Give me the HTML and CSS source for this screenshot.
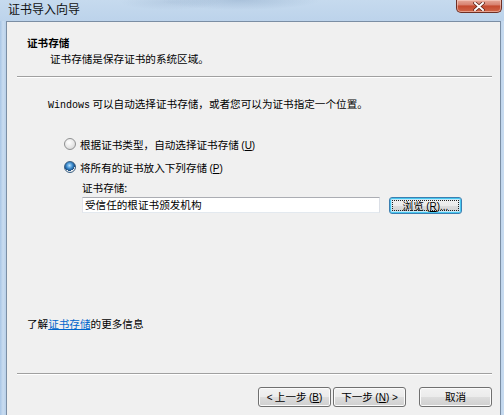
FILE: index.html
```html
<!DOCTYPE html>
<html lang="zh-CN">
<head>
    <meta charset="UTF-8">
    <title>证书导入向导</title>
    <link rel="stylesheet" href="styles.css">
</head>
<body>
    <div class="window">
        <div class="titlebar">
            <span class="title">证书导入向导</span>
            <div class="close">
                <svg width="12" height="9" viewBox="0 0 12 9">
                    <path d="M2 1 L10 8 M10 1 L2 8" stroke="#5a1e14" stroke-width="3.4" stroke-linecap="square"/>
                    <path d="M2 1 L10 8 M10 1 L2 8" stroke="#ffffff" stroke-width="2" stroke-linecap="square"/>
                </svg>
            </div>
        </div>

        <div class="client">
            <div class="header">
                <div class="header-title">证书存储</div>
                <div class="header-sub">证书存储是保存证书的系统区域。</div>
            </div>
            <div class="sep"></div>

            <div class="body">
                <p class="intro"><span class="mono">Windows</span> 可以自动选择证书存储，或者您可以为证书指定一个位置。</p>

                <label class="radio-row">
                    <span class="radio"></span>
                    <span>根据证书类型，自动选择证书存储 <span class="key">(<u>U</u>)</span></span>
                </label>
                <label class="radio-row">
                    <span class="radio checked"></span>
                    <span>将所有的证书放入下列存储 <span class="key">(<u>P</u>)</span></span>
                </label>

                <div class="store">
                    <div class="store-label">证书存储:</div>
                    <div class="store-row">
                        <div class="textbox">受信任的根证书颁发机构</div>
                        <button class="btn default">浏览 <span class="key">(<u>R</u>)...</span></button>
                    </div>
                </div>
            </div>

            <p class="more">了解<a href="#">证书存储</a>的更多信息</p>
            <div class="sep"></div>

            <div class="footer">
                <button class="btn"><span class="key">&lt;</span> 上一步 <span class="key">(<u>B</u>)</span></button>
                <button class="btn">下一步 <span class="key">(<u>N</u>) &gt;</span></button>
                <button class="btn cancel">取消</button>
            </div>
        </div>
    </div>
</body>
</html>
```

FILE: styles.css
```css
html, body {
    margin: 0;
    padding: 0;
}
body {
    width: 504px;
    height: 415px;
    overflow: hidden;
    font-family: "Noto Sans CJK SC", "Noto Sans", sans-serif;
    font-size: 10.6px;
    color: #000;
}
.window {
    height: 415px;
    display: flex;
    flex-direction: column;
    background: linear-gradient(90deg, #a9c6e6 0px, #c9dcf0 3px, #b8d0ea 6px, #b8d0ea 498px, #c9dcf0 504px);
}
.titlebar {
    height: 21px;
    display: flex;
    justify-content: space-between;
    align-items: flex-start;
    background:
        radial-gradient(ellipse 80px 10px at 240px 0px, rgba(120, 150, 185, 0.35), transparent),
        radial-gradient(ellipse 50px 8px at 170px 2px, rgba(140, 165, 195, 0.25), transparent),
        linear-gradient(#c6daee, #bcd3eb);
}
.title {
    margin: 1px 0 0 8px;
    font-size: 12px;
    line-height: 16px;
    color: #111;
}
.close {
    width: 44px;
    height: 12px;
    margin-right: 2px;
    border: 1px solid #6e2f24;
    border-top: none;
    border-radius: 0 0 5px 5px;
    background: linear-gradient(#e6a999 0%, #d88270 40%, #c54a2f 50%, #cf6548 100%);
    box-shadow: inset 0 0 0 1px rgba(255, 220, 210, 0.5);
    display: flex;
    align-items: center;
    justify-content: center;
}
.client {
    flex: 1;
    margin: 0 3px 0 6px;
    border: 1px solid #7b8ea4;
    border-bottom: none;
    background: #f0f0f0;
    display: flex;
    flex-direction: column;
}
.header {
    padding: 14px 0 0 20px;
}
.header-title {
    font-weight: bold;
    line-height: 14px;
}
.header-sub {
    margin: 2px 0 0 23px;
    line-height: 14px;
}
.sep {
    margin: 10px 8px 0 10px;
    border-top: 1px solid #a0a0a0;
    border-bottom: 1px solid #ffffff;
}
.body {
    flex: 1;
    padding-left: 41px;
}
.intro {
    margin: 19px 0 23px 0;
    line-height: 14px;
}
.mono {
    font-family: "Liberation Mono", "DejaVu Sans Mono", monospace;
    font-size: 10px;
}
.key {
    font-family: "Liberation Sans", "Noto Sans", sans-serif;
    font-size: 10px;
}
.radio-row {
    display: flex;
    align-items: center;
    height: 16px;
    margin: 0 0 7px 16px;
    gap: 4px;
}
.radio {
    width: 10px;
    height: 10px;
    border-radius: 50%;
    border: 1px solid #8f9091;
    background: radial-gradient(circle at 40% 35%, #ffffff 0%, #e6e6e6 55%, #cfcfcf 100%);
}
.radio.checked {
    border-color: #3a5f82;
    background:
        radial-gradient(circle at 45% 35%, #b8e2ff 0%, #3d8dd0 35%, #1b4f86 60%, transparent 62%),
        radial-gradient(circle, #f4f4f4 60%, #cfcfcf 100%);
}
.store {
    margin: -1px 0 0 34px;
}
.store-label {
    line-height: 14px;
}
.store-row {
    display: flex;
    align-items: flex-start;
    gap: 9px;
    margin-top: 2px;
}
.textbox {
    width: 292px;
    height: 14px;
    padding: 0 2px;
    border: 1px solid #abadb3;
    border-color: #abadb3 #dbdfe6 #e3e9ef #e2e3ea;
    background: #fff;
    line-height: 14px;
}
.btn {
    font-family: inherit;
    font-size: 10.6px;
    color: #000;
    height: 20px;
    padding: 0;
    border: 1px solid #707070;
    border-radius: 3px;
    background: linear-gradient(#f2f2f2 0%, #ebebeb 50%, #dddddd 51%, #cfcfcf 100%);
    box-shadow: inset 0 0 0 1px #fbfbfb;
    line-height: 16px;
}
.btn.default {
    width: 73px;
    height: 17px;
    line-height: 13px;
    border-color: #3c7fb1;
    box-shadow: inset 0 0 0 1px #48c8f0, inset 0 0 0 2px #c3e7f7;
    outline: 1px dotted #222;
    outline-offset: -4px;
}
.more {
    margin: 0 0 32px 20px;
    line-height: 14px;
}
.more a {
    color: #0066cc;
    text-decoration: underline;
}
.footer {
    display: flex;
    justify-content: flex-end;
    padding: 12px 8px 8px 0;
}
.footer .btn {
    width: 73px;
    margin-left: 2px;
}
.footer .btn.cancel {
    margin-left: 13px;
}
```
